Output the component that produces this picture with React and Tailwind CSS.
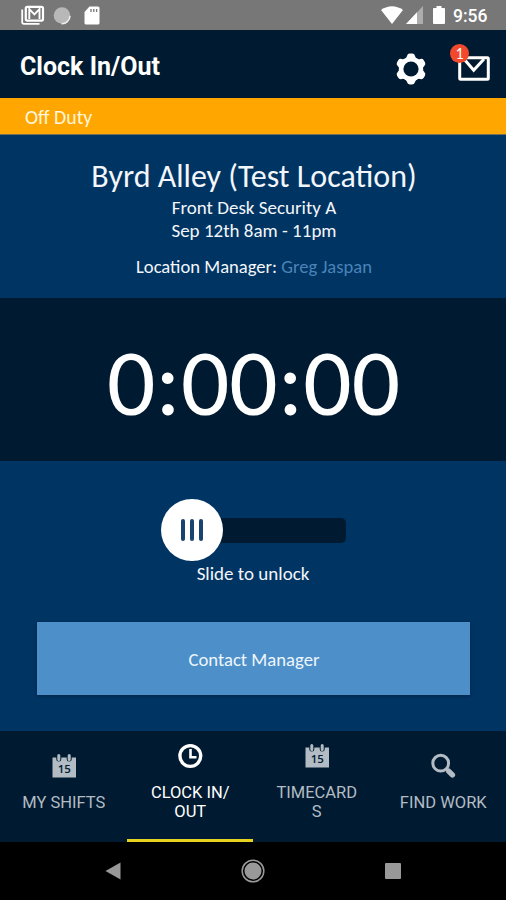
const TABS = [
  { id: "shifts", lines: ["MY SHIFTS"], Icon: CalendarIcon },
  { id: "clock", lines: ["CLOCK IN/", "OUT"], Icon: ClockIcon, active: true },
  { id: "timecards", lines: ["TIMECARD", "S"], Icon: CalendarIcon },
  { id: "work", lines: ["FIND WORK"], Icon: SearchIcon },
];

function CalendarIcon() {
  return (
    <svg width="26" height="26" viewBox="0 0 26 26">
      <path
        fill="currentColor"
        d="M1.500 4.500H5.300v1.500a2.500 2.500 0 0 0 5 0V4.500h5.400v1.500a2.500 2.500 0 0 0 5 0V4.500h4.300v20H1.500z"
      />
      <path
        d="M7.800 2.500v4M18.200 2.500v4"
        stroke="currentColor"
        strokeWidth="3"
        strokeLinecap="round"
      />
      <text
        x="13.300"
        y="20.300"
        textAnchor="middle"
        fill="#001b31"
        className="font-['Open_Sans'] text-[11.5px] font-semibold"
      >
        15
      </text>
    </svg>
  );
}

function ClockIcon() {
  return (
    <svg width="26" height="26" viewBox="0 0 26 26" fill="none" stroke="currentColor">
      <circle cx="13.300" cy="13" r="10.400" strokeWidth="3.400" />
      <path d="M13.500 6v8.300h6" strokeWidth="2.600" />
    </svg>
  );
}

function SearchIcon() {
  return (
    <svg width="26" height="26" viewBox="0 0 26 26" fill="none" stroke="currentColor">
      <circle cx="10.700" cy="10.200" r="7.900" strokeWidth="3" />
      <path d="M16 15.500l2 2" strokeWidth="3" />
      <path d="M18.600 18.100l3.800 3.800" strokeWidth="5.400" strokeLinecap="round" />
    </svg>
  );
}

function GearIcon() {
  return (
    <svg width="32" height="32" viewBox="0 0 32 32">
      <g fill="white">
        <circle cx="16" cy="16" r="12.200" />
        {[0, 60, 120, 180, 240, 300].map((a) => (
          <path
            key={a}
            transform={`rotate(${a} 16 16)`}
            d="M9 7Q11.600 5.200 12 3Q12.500 .6 14.800 .6H17.200Q19.500 .6 20 3Q20.400 5.200 23 7z"
          />
        ))}
      </g>
      <circle cx="16" cy="16" r="7.600" fill="#001b31" />
    </svg>
  );
}

function MailIcon() {
  return (
    <svg width="32" height="25" viewBox="0 0 32 25" fill="none" stroke="white">
      <rect x="1.700" y="1.700" width="28.600" height="21.600" rx="1" strokeWidth="3" />
      <path d="M6 3l9.700 11.200L26 3" strokeWidth="3" />
    </svg>
  );
}

function StatusBar() {
  return (
    <div className="flex h-[30px] items-center bg-[#777777] pl-[21px] pr-[18px] text-white">
      <svg width="24" height="20" viewBox="0 0 24 20" fill="none">
        <path d="M1.200 4.500V17Q1.200 18.800 3 18.800H18.500" stroke="white" strokeWidth="1.800" />
        <rect x="4.800" y="1.800" width="17.200" height="13.800" rx="1.500" stroke="white" strokeWidth="2.200" />
        <path d="M8.300 14V4.200L13.400 9.500L18.500 4.200V14" stroke="white" strokeWidth="1.900" />
      </svg>
      <svg className="ml-2" width="19" height="19" viewBox="0 0 19 19">
        <circle cx="9" cy="9.500" r="8.300" fill="#b8b8b8" />
        <path d="M17 10a8 8 0 0 1-8.500 7.700" stroke="#eeeeee" strokeWidth="1.500" fill="none" />
      </svg>
      <svg className="ml-[12px]" width="16" height="19" viewBox="0 0 16 19">
        <path
          d="M5.500 .5H14Q15.500 .5 15.500 2V17Q15.500 18.500 14 18.500H2Q.5 18.500 .5 17V6z"
          fill="white"
        />
        <path d="M7 3v3M9.800 3v3M12.600 3v3" stroke="#777777" strokeWidth="1.300" />
      </svg>
      <div className="flex-1" />
      <svg width="22" height="18" viewBox="0 0 22 18">
        <path d="M0 4Q11-3.500 22 4L11 18z" fill="white" />
      </svg>
      <svg className="ml-[3px]" width="17" height="18" viewBox="0 0 17 18">
        <path d="M17 0V18H0z" fill="#adadad" />
        <path d="M11 6.300V18H0z" fill="white" />
      </svg>
      <svg className="ml-[10px]" width="12" height="18" viewBox="0 0 12 18">
        <path
          d="M3.500 0h5v2H11q1 0 1 1v14q0 1-1 1H1q-1 0-1-1V3q0-1 1-1h2.500z"
          fill="white"
        />
      </svg>
      <span className="ml-[8px] w-[35px] whitespace-nowrap pt-[4px] text-[17.5px] font-medium leading-none">
        9:56
      </span>
    </div>
  );
}

function Header() {
  return (
    <header className="flex h-[68px] items-center bg-[#001b31] pl-[20px] pr-[16px]">
      <h1 className="pt-[4px] text-[25px] font-bold leading-none text-white">
        Clock In/Out
      </h1>
      <div className="ml-auto flex items-center pt-[9px]">
        <GearIcon />
        <div className="relative ml-[31px]">
          <MailIcon />
          <span className="absolute -left-[8px] -top-[12px] flex size-[19px] items-center justify-center rounded-full bg-[#f2492c] pt-[1px] font-[Carlito,Lato,sans-serif] text-[16px] leading-none text-white">
            1
          </span>
        </div>
      </div>
    </header>
  );
}

function ShiftInfo() {
  return (
    <section className="h-[163px] bg-[#003463] pl-[2px] pt-[23px] text-center font-[Carlito,Lato,sans-serif] text-[19px] text-[#f3f6fa]">
      <h2 className="text-[32px] leading-[38px]">Byrd Alley (Test Location)</h2>
      <p className="leading-[23px]">Front Desk Security A</p>
      <p className="leading-[23px]">Sep 12th 8am - 11pm</p>
      <p className="mt-[13px] text-[18.6px] leading-[23px]">
        Location Manager: <span className="text-[#4a83b8]">Greg Jaspan</span>
      </p>
    </section>
  );
}

function SlideToUnlock() {
  return (
    <div className="flex flex-col items-center">
      <div className="flex h-[62px] w-[185px] items-center">
        <div className="z-10 flex size-[62px] shrink-0 items-center justify-center gap-[5px] rounded-full bg-white">
          <span className="h-[22px] w-[4px] rounded-full bg-[#174570]" />
          <span className="h-[22px] w-[4px] rounded-full bg-[#174570]" />
          <span className="h-[22px] w-[4px] rounded-full bg-[#174570]" />
        </div>
        <div className="-ml-[10px] h-[25px] flex-1 rounded-r-[5px] bg-[#001b31]" />
      </div>
      <p className="pt-[1px] text-[19px] leading-[23px] text-[#f3f6fa]">Slide to unlock</p>
    </div>
  );
}

function TabBar() {
  return (
    <nav className="grid h-[111px] grid-cols-4 bg-[#001b31]">
      {TABS.map(({ id, lines, Icon, active }) => (
        <div
          key={id}
          className={`flex flex-col items-center justify-center border-b-[3px] pb-[6px] pl-[1px] ${
            active ? "border-[#e6d21f] text-white" : "border-transparent text-[#b3bcc4]"
          }`}
        >
          <Icon />
          <div className="mt-[14px] text-center text-[16.5px] leading-[19px]">
            {lines.map((line) => (
              <div key={line}>{line}</div>
            ))}
          </div>
        </div>
      ))}
    </nav>
  );
}

function SystemNav() {
  return (
    <div className="flex h-[58px] items-center justify-center gap-[120px] bg-black">
      <svg width="16" height="18" viewBox="0 0 16 18">
        <path d="M15.500 .5V17.500L.5 9z" fill="#999999" />
      </svg>
      <svg width="24" height="24" viewBox="0 0 24 24">
        <circle cx="12" cy="12" r="10.800" fill="none" stroke="#999999" strokeWidth="1.500" />
        <circle cx="12" cy="12" r="8.500" fill="#999999" />
      </svg>
      <div className="size-[16px] rounded-[1px] bg-[#999999]" />
    </div>
  );
}

export default function App() {
  return (
    <div className="flex h-[900px] w-[506px] flex-col overflow-hidden bg-[#003463] font-[Roboto,sans-serif]">
      <StatusBar />
      <Header />
      <div className="flex h-[37px] items-center border-b border-[#75705a] bg-[#ffa600] pl-[25px] pt-[3px] font-[Carlito,Lato,sans-serif] text-[19.8px] text-[#fff6df]">
        Off Duty
      </div>
      <ShiftInfo />
      <div className="flex h-[163px] items-center justify-center bg-[#001b31] pl-[1px] pt-[7px] font-[Carlito,Lato,sans-serif] text-[95.5px] leading-none text-white">
        0:00:00
      </div>
      <main className="flex h-[270px] flex-col items-center pt-[38px] font-[Carlito,Lato,sans-serif]">
        <SlideToUnlock />
        <button className="mt-[37px] h-[73px] w-[433px] bg-[#4d8fc8] pl-[2px] pt-[3px] text-[18.7px] text-[#eef6fd] shadow-[0_1px_3px_rgba(0,0,0,0.3)]">
          Contact Manager
        </button>
      </main>
      <TabBar />
      <SystemNav />
    </div>
  );
}
